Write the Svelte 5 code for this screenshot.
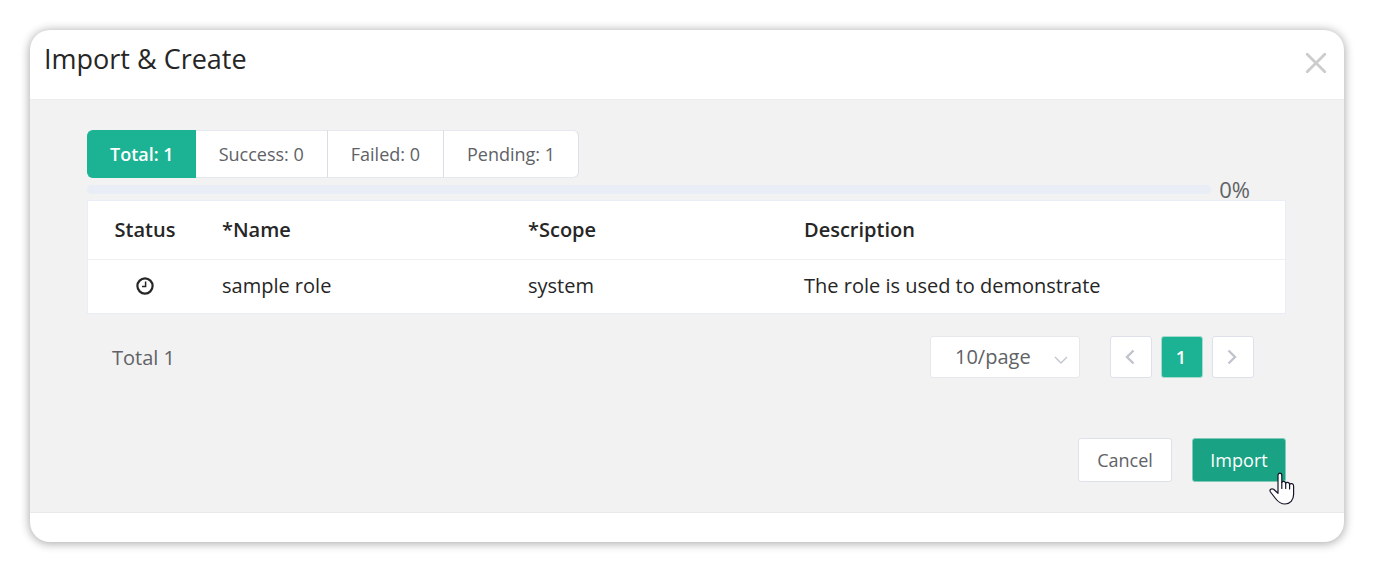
<script>
  const tabs = [
    { key: 'total', label: 'Total', count: 1 },
    { key: 'success', label: 'Success', count: 0 },
    { key: 'failed', label: 'Failed', count: 0 },
    { key: 'pending', label: 'Pending', count: 1 },
  ];
  const rows = [
    { name: 'sample role', scope: 'system', description: 'The role is used to demonstrate' },
  ];
  const progress = 0;
  let active = $state('total');
  let pageSize = $state('10');
</script>

<div class="dialog" role="dialog" aria-labelledby="dialog-title">
  <header>
    <h1 id="dialog-title">Import &amp; Create</h1>
    <button class="close" type="button" aria-label="Close">
      <svg width="22" height="22" viewBox="0 0 22 22" fill="none" stroke="currentColor" stroke-width="2.8" stroke-linecap="round">
        <path d="M2.2 2.2 19.8 19.8M19.8 2.2 2.2 19.8" />
      </svg>
    </button>
  </header>

  <main>
    <div class="tabs">
      {#each tabs as tab (tab.key)}
        <button type="button" class:active={active === tab.key} aria-pressed={active === tab.key} onclick={() => (active = tab.key)}>{tab.label}: {tab.count}</button>
      {/each}
    </div>

    <div class="progress">
      <div class="track" role="progressbar" aria-label="Import progress" aria-valuemin="0" aria-valuemax="100" aria-valuenow={progress}>
        <div class="fill" style="width: {progress}%"></div>
      </div>
      <span class="percent">{progress}%</span>
    </div>

    <table>
      <thead>
        <tr>
          <th class="status" scope="col">Status</th>
          <th class="name" scope="col">*Name</th>
          <th class="scope" scope="col">*Scope</th>
          <th scope="col">Description</th>
        </tr>
      </thead>
      <tbody>
        {#each rows as row (row.name)}
          <tr>
            <td class="status">
              <svg width="18" height="18" viewBox="0 0 18 18" fill="none" stroke="currentColor" role="img" aria-label="Pending">
                <circle cx="9" cy="9" r="7.6" stroke-width="2.2" />
                <path d="M9.6 4.6V9.6H6" stroke-width="1.5" />
              </svg>
            </td>
            <td>{row.name}</td>
            <td>{row.scope}</td>
            <td>{row.description}</td>
          </tr>
        {/each}
      </tbody>
    </table>

    <div class="pagination">
      <span class="total">Total {rows.length}</span>
      <div class="size">
        <select aria-label="Rows per page" bind:value={pageSize}>
          <option value="10">10/page</option>
          <option value="20">20/page</option>
          <option value="50">50/page</option>
        </select>
        <svg width="14" height="8" viewBox="0 0 14 8" fill="none" stroke="currentColor" stroke-width="1.3">
          <path d="M1 1 7 7 13 1" />
        </svg>
      </div>
      <nav aria-label="Pages">
        <button type="button" aria-label="Previous page">
          <svg width="10" height="16" viewBox="0 0 10 16" fill="none" stroke="currentColor" stroke-width="2.4">
            <path d="M8.5 1.5 2 8 8.5 14.5" />
          </svg>
        </button>
        <button type="button" class="current" aria-current="page">1</button>
        <button type="button" aria-label="Next page">
          <svg width="10" height="16" viewBox="0 0 10 16" fill="none" stroke="currentColor" stroke-width="2.4">
            <path d="M1.5 1.5 8 8 1.5 14.5" />
          </svg>
        </button>
      </nav>
    </div>

    <div class="actions">
      <button type="button">Cancel</button>
      <button type="button" class="primary">
        Import
        <svg class="pointer" width="26" height="34" viewBox="0 0 26 34" fill="#fff" stroke="#15152a" stroke-width="1.2" stroke-linejoin="round" stroke-linecap="round" aria-hidden="true">
          <path d="M9 18.500V3.400C9 .4 12.800 .4 12.800 3.400V10.500C13.300 8.800 16.400 8.900 16.700 11.300C17.400 9.700 20.400 10 20.600 12.400C21.500 11 24.600 11.300 24.600 14V22.500C24.600 28 21 32 16 32C11 32 8.800 29.500 6.500 26.500L1.500 20C-.1 17.500 2.600 16 4.600 17.300L9 21.300Z" />
          <path d="M12.800 10.500V16.500M16.700 11.300V16.500M20.600 12.400V17" />
        </svg>
      </button>
    </div>
  </main>
  <footer></footer>
</div>

<style>
  :global(body) {
    background: #fff;
    font-family: 'Open Sans', sans-serif;
    color: #262626;
  }

  .dialog {
    margin: 30px 30px 19px;
    overflow: clip;
    border-radius: 20px;
    background: #fff;
    box-shadow: 0 1px 10px 1px rgba(0, 0, 0, 0.32);
  }

  button,
  select {
    box-sizing: border-box;
    margin: 0;
    font: inherit;
    color: #606266;
    background: #fff;
    border: 1px solid #dfe1ea;
    cursor: pointer;
  }

  header {
    display: flex;
    align-items: center;
    justify-content: space-between;
    box-sizing: border-box;
    height: 69px;
    padding: 0 15px 3px 14px;
  }

  h1 {
    margin: 0;
    padding-bottom: 8px;
    font-size: 27px;
    line-height: 36px;
    font-weight: 400;
  }

  .close {
    display: flex;
    padding: 2px;
    border: 0;
    color: #ccc;
  }

  main {
    padding: 30px 58px 30px 57px;
    background: #f2f2f2;
    border-top: 1px solid #ececec;
    border-bottom: 1px solid #e9e9e9;
  }

  .tabs {
    display: flex;
  }

  .tabs button {
    height: 48px;
    padding: 0 23px;
    border-color: #e6e8f0;
    border-left-width: 0;
    border-right-color: #dcdee6;
    font-size: 18px;
    font-weight: 500;
  }

  .tabs button:first-child {
    padding: 0 22px;
    border-right-width: 0;
    border-left-width: 1px;
    border-radius: 6px 0 0 6px;
  }

  .tabs button:last-child {
    border-radius: 0 6px 6px 0;
  }

  .tabs .active {
    color: #fff;
    background: #1bb394;
    border-color: #1bb394;
    font-weight: 600;
  }

  .progress {
    display: flex;
    align-items: center;
    gap: 8px;
    height: 22px;
    padding-right: 36px;
  }

  .track {
    flex: 1;
    height: 9px;
    border-radius: 5px;
    background: #e9edf5;
    overflow: hidden;
  }

  .fill {
    height: 100%;
    background: #1bb394;
  }

  .percent {
    font-size: 22px;
    line-height: 22px;
    color: #606266;
  }

  table {
    box-sizing: border-box;
    width: 100%;
    table-layout: fixed;
    border-collapse: separate;
    border-spacing: 0;
    background: #fff;
    border: 1px solid #e9edf5;
    font-size: 20px;
    line-height: 28px;
  }

  th,
  td {
    padding: 12px 20px 13px;
    text-align: left;
  }

  th {
    padding: 15px 20px;
    border-bottom: 1px solid #efefef;
    font-weight: 600;
  }

  .status {
    width: 74px;
    text-align: center;
  }

  .name {
    width: 266px;
  }

  .scope {
    width: 236px;
  }

  .status svg {
    display: block;
    margin: 0 auto;
  }

  .pagination {
    display: flex;
    align-items: center;
    padding: 22px 32px 0 25px;
    color: #606266;
    font-size: 20px;
  }

  .total {
    margin-right: auto;
  }

  .size {
    position: relative;
    margin-right: 30px;
  }

  select {
    display: block;
    width: 150px;
    height: 42px;
    padding: 0 40px 2px 24px;
    border-color: #e6e8ec;
    border-radius: 3px;
    appearance: none;
  }

  .size svg {
    position: absolute;
    right: 12px;
    top: 20px;
    color: #c0c4cc;
    pointer-events: none;
  }

  nav {
    display: flex;
    gap: 9px;
  }

  nav button {
    display: flex;
    align-items: center;
    justify-content: center;
    width: 42px;
    height: 42px;
    padding: 0 2px 0 0;
    border-radius: 3px;
    color: #c0c4cc;
    font-size: 18px;
  }

  nav .current {
    color: #fff;
    background: #1bb394;
    border-color: #a5dccf;
    font-weight: 600;
  }

  .actions {
    display: flex;
    justify-content: flex-end;
    gap: 20px;
    padding-top: 60px;
  }

  .actions button {
    width: 94px;
    height: 44px;
    padding: 0;
    border-radius: 3px;
    font-size: 18px;
  }

  .actions .primary {
    position: relative;
    color: #fff;
    background: #19a384;
    border-color: #7fcab9;
    font-weight: 500;
  }

  .pointer {
    position: absolute;
    right: -10px;
    bottom: -25px;
  }

  footer {
    height: 29px;
  }
</style>
